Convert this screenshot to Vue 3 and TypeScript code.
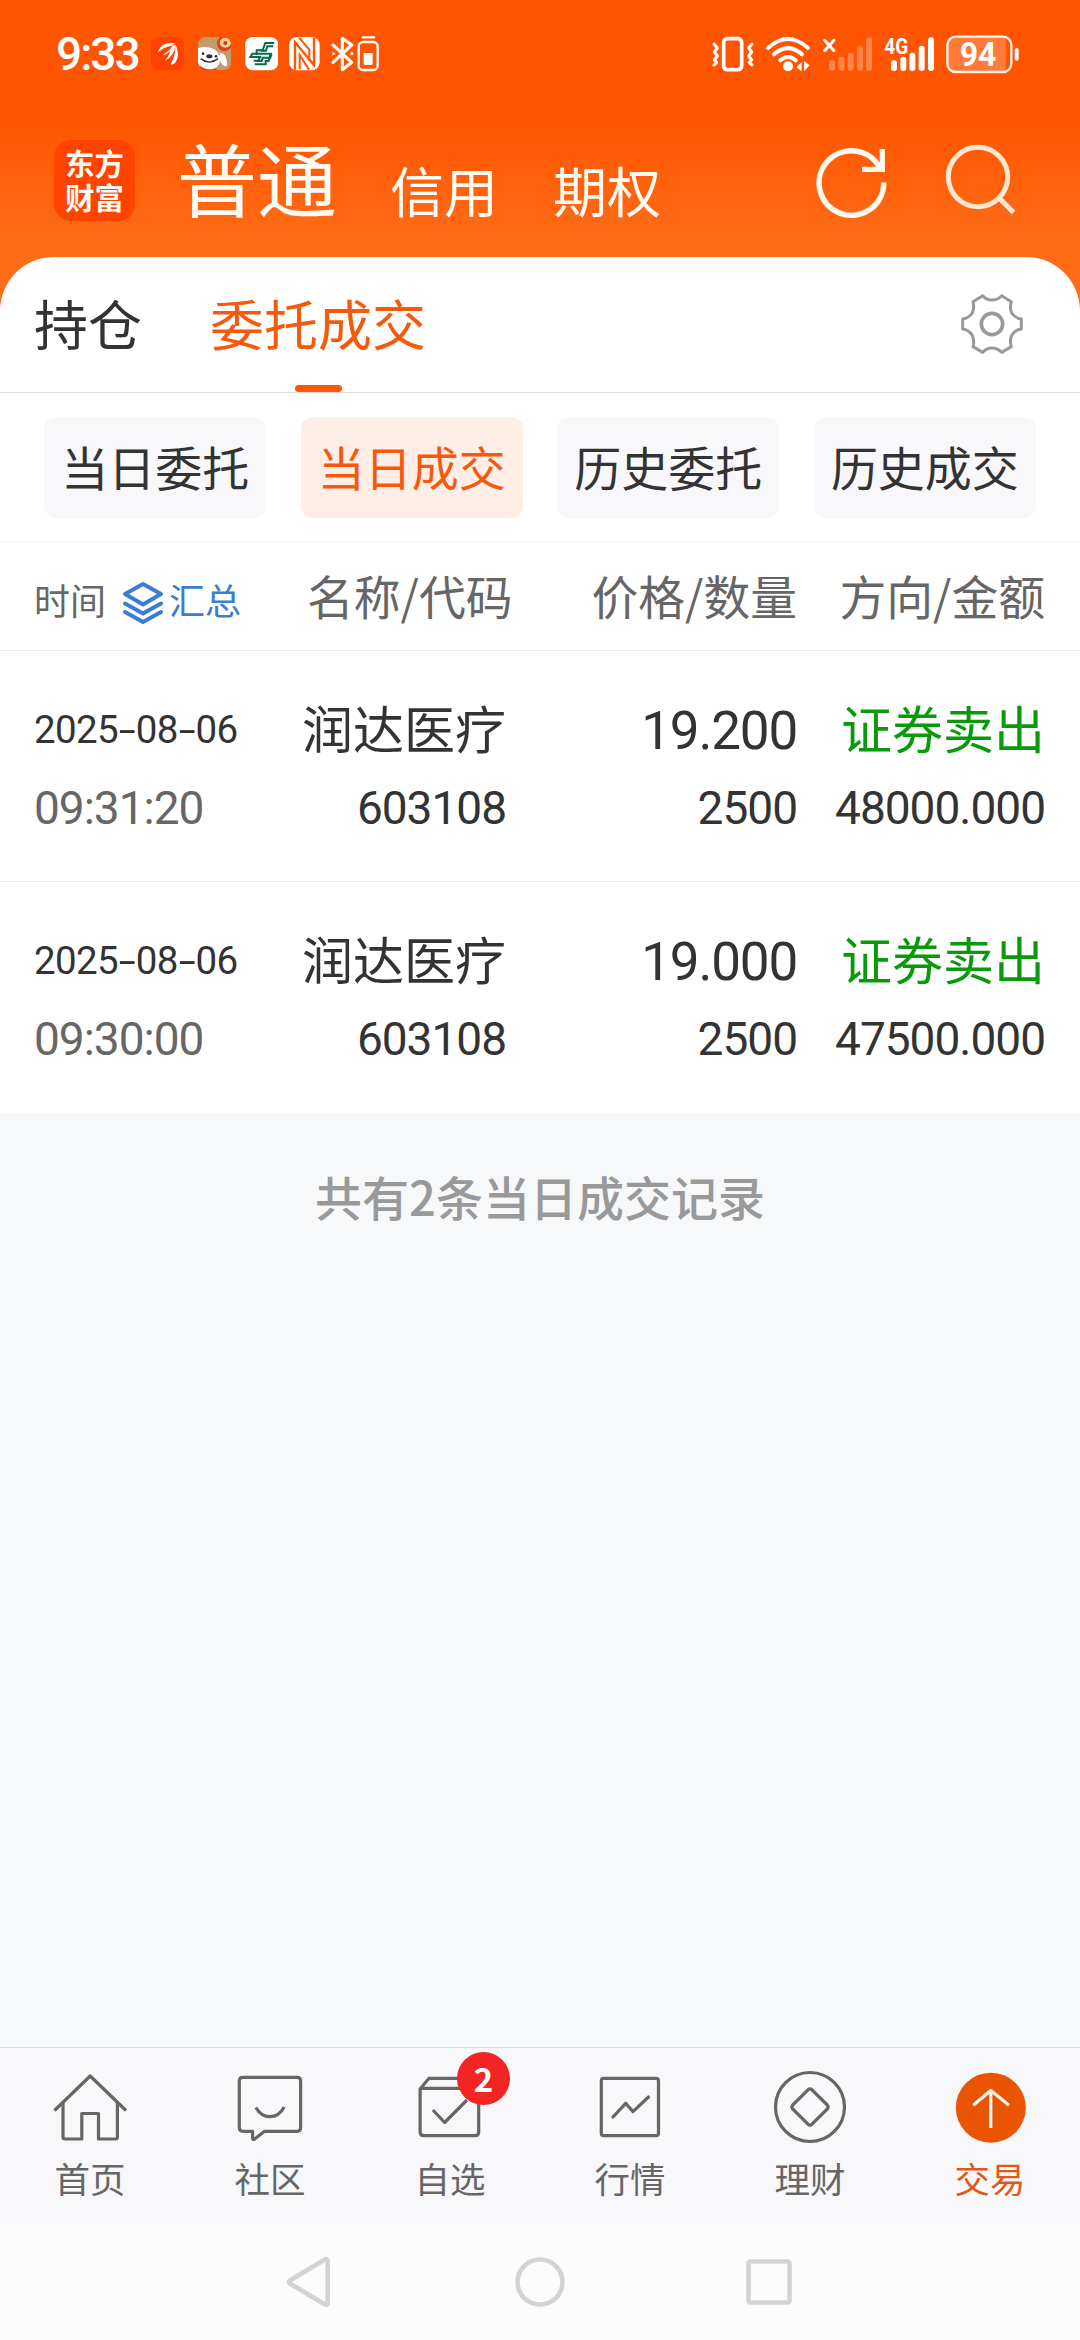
<script setup lang="ts">
interface Trade {
  date: string
  time: string
  name: string
  code: string
  price: string
  quantity: string
  side: string
  amount: string
}

const accounts: string[] = ['信用', '期权']
const filters: string[] = ['当日委托', '当日成交', '历史委托', '历史成交']
const activeFilter = '当日成交'

const trades: Trade[] = [
  {
    date: '2025-08-06',
    time: '09:31:20',
    name: '润达医疗',
    code: '603108',
    price: '19.200',
    quantity: '2500',
    side: '证券卖出',
    amount: '48000.000',
  },
  {
    date: '2025-08-06',
    time: '09:30:00',
    name: '润达医疗',
    code: '603108',
    price: '19.000',
    quantity: '2500',
    side: '证券卖出',
    amount: '47500.000',
  },
]
</script>

<template>
  <div class="screen">
    <header class="hero">
      <div class="status">
        <span class="clock">9:33</span>
        <svg class="s-app" viewBox="332 50 100 100">
          <rect x="332" y="50" width="100" height="100" rx="24" fill="#ff4200" />
          <path d="M353 97Q358 76 376 70Q392 66 404 69L396 76Q372 78 353 97Z" fill="#fff" />
          <path d="M363 106Q386 94 397 76L405 73Q404 104 374 122Q388 102 390 92Q378 104 363 106Z" fill="#fff" />
          <path d="M391 131Q407 104 405 72Q415 92 412 112Q407 128 396 133Z" fill="#fff" />
        </svg>
        <svg class="s-app" viewBox="474 50 100 100">
          <clipPath id="dogClip"><rect x="474" y="50" width="100" height="100" rx="24" /></clipPath>
          <g clip-path="url(#dogClip)">
            <rect x="474" y="50" width="100" height="100" fill="#c39a69" />
            <path d="M474 84Q494 76 515 84Q540 92 541 118Q538 145 510 147Q482 146 474 128Z" fill="#fff" />
            <path d="M541 98Q556 96 561 124Q565 138 555 138Q540 132 539 112Z" fill="#fff" />
            <path d="M480 138Q505 155 530 144V150H480Z" fill="#e23a20" />
            <path d="M482 115Q508 136 534 115" fill="none" stroke="#332d28" stroke-width="4" />
            <ellipse cx="508" cy="108" rx="9" ry="6" fill="#332d28" />
            <circle cx="489" cy="100" r="4" fill="#332d28" />
            <circle cx="528" cy="108" r="4" fill="#332d28" />
            <circle cx="554" cy="69" r="23" fill="#e33a1d" />
            <ellipse cx="556" cy="67" rx="17" ry="15" fill="#f9cd94" />
            <circle cx="556" cy="68" r="6" fill="#c23a20" />
          </g>
        </svg>
        <svg class="s-app" viewBox="615 50 100 100">
          <rect x="615" y="50" width="100" height="100" rx="24" fill="#fff" />
          <g fill="none" stroke="#04694f" stroke-width="6" stroke-linejoin="miter">
            <path d="M703 68H676L668 90H650V100H692L686 122H677V132H644" />
            <path d="M700 78H682L678 91H662" />
            <path d="M651 100H637L631 110H660L655 121H641" />
            <path d="M695 101L691 112H668L665 122H650" />
          </g>
        </svg>
        <svg class="s-nfc" viewBox="748 50 92 100">
          <rect x="748" y="50" width="92" height="100" rx="24" fill="#fff" />
          <path d="M766 148V66L823 134V52" fill="none" stroke="#ff5500" stroke-width="7" />
          <path d="M778 52L809 88V122M780 146V104L808 148" fill="none" stroke="#ff5500" stroke-width="6" />
        </svg>
        <svg class="s-bt" viewBox="874 44 146 112">
          <path d="M880 74L936 126L908 148V54L936 74L880 126" fill="none" stroke="#fff" stroke-width="9.5" stroke-linejoin="round" stroke-linecap="round" />
          <path d="M878 94L888 100L878 106Z" fill="#fff" />
          <circle cx="936" cy="100" r="5" fill="#fff" />
          <rect x="957" y="65" width="57" height="84" rx="13" fill="none" stroke="#fff" stroke-width="7" />
          <path d="M970 51H1003" stroke="#fff" stroke-width="7" stroke-linecap="round" />
          <rect x="972" y="98" width="27" height="36" rx="4" fill="#fff" />
        </svg>
        <svg class="s-right" viewBox="60 40 930 120">
          <g fill="none" stroke="#fff" stroke-linecap="round" stroke-linejoin="round">
            <rect x="98" y="54" width="54" height="93" rx="11" stroke-width="11" />
            <path d="M69 70L79 82L70 94L79 106L70 118L77 125L69 133" stroke-width="9" />
            <path d="M183 70L173 82L182 94L173 106L182 118L175 125L183 133" stroke-width="9" />
            <path d="M231 82Q291 28 351 82" stroke-width="12" />
            <path d="M249 101Q291 64 333 101" stroke-width="12" />
            <path d="M268 119Q291 99 314 119" stroke-width="12" />
            <path d="M401 59L429 90M429 59L401 90" stroke-width="9" />
          </g>
          <circle cx="291" cy="137" r="15" fill="#fff" />
          <path d="M316 140L332 124V152ZM356 134L339 121V152Z" fill="#fff" />
          <g stroke="#ff8449" stroke-width="18" stroke-linecap="round">
            <path d="M423 128V142M451 117V142M479 105V142M507 84V142M534 59V142" />
          </g>
          <g stroke="#fff" stroke-width="18" stroke-linecap="round">
            <path d="M609 128V142M637 117V142M664 105V142M692 84V142M720 59V142" />
          </g>
          <text x="580" y="101" class="net" textLength="72" lengthAdjust="spacingAndGlyphs">4G</text>
          <path d="M794 50H944V152H794Q770 152 770 128V74Q770 50 794 50Z" fill="#ff7a3b" />
          <rect x="769" y="48" width="192" height="106" rx="25" fill="none" stroke="#fff2e8" stroke-width="7" />
          <path d="M977 88V114" stroke="#fff" stroke-width="12" stroke-linecap="round" />
          <text x="806" y="135" class="level" textLength="110" lengthAdjust="spacingAndGlyphs">94</text>
        </svg>
      </div>

      <nav class="accounts">
        <div class="logo">东方财富</div>
        <span class="account-main">普通</span>
        <span v-for="account in accounts" :key="account" class="account">{{ account }}</span>
        <svg class="refresh" viewBox="0 0 76 76" fill="none" stroke="#fff9f0" stroke-width="5.5">
          <path d="M69.7 38.5A32.3 32.3 0 1 1 66 24" />
          <path d="M68.3 5V25.3H48" stroke-width="5.2" />
        </svg>
        <svg class="search" viewBox="0 0 76 76" fill="none" stroke="#ffe6d3" stroke-width="5">
          <circle cx="36" cy="34" r="29.7" />
          <path d="M57 55L71.5 69.5" />
        </svg>
      </nav>
    </header>

    <main class="panel">
      <div class="tabs">
        <span class="tab">持仓</span>
        <span class="tab tab-on">委托成交</span>
        <svg class="gear" viewBox="780 547 192 192" fill="none" stroke="#999" stroke-linejoin="round">
          <path
            stroke-width="9"
            d="M848 558Q859 571 876 571Q893 571 905 558L934 576Q928 594 935 610Q946 626 964 628V658Q946 660 935 677Q928 694 934 711L905 728Q893 715 876 715Q859 715 848 728L819 711Q824 694 817 677Q806 660 788 658V628Q806 626 817 610Q824 594 819 576Z"
          />
          <circle cx="876" cy="643" r="32" stroke-width="11" />
        </svg>
      </div>

      <div class="filters">
        <span v-for="item in filters" :key="item" class="chip" :class="{ 'chip-on': item === activeFilter }">{{ item }}</span>
      </div>

      <div class="grid head">
        <div class="time-head">
          <span>时间</span>
          <svg class="layers" viewBox="0 0 42 44" fill="none" stroke="#3b7dd2" stroke-width="4" stroke-linejoin="round" stroke-linecap="round">
            <path d="M21 3L39 13L21 23.5L3 13Z" />
            <path d="M3 22.5L21 32.5L39 22.5" />
            <path d="M3 31L21 41L39 31" />
          </svg>
          <span class="summary">汇总</span>
        </div>
        <span class="h-name">名称/代码</span>
        <span>价格/数量</span>
        <span>方向/金额</span>
      </div>

      <div v-for="trade in trades" :key="trade.time" class="grid row">
        <div class="cell left">
          <span class="date"><template v-for="(part, i) in trade.date.split('-')" :key="i"><i v-if="i > 0">-</i>{{ part }}</template></span>
          <span class="num muted">{{ trade.time }}</span>
        </div>
        <div class="cell name-cell">
          <span class="word">{{ trade.name }}</span>
          <span class="num">{{ trade.code }}</span>
        </div>
        <div class="cell">
          <span class="price">{{ trade.price }}</span>
          <span class="num">{{ trade.quantity }}</span>
        </div>
        <div class="cell">
          <span class="word sell">{{ trade.side }}</span>
          <span class="num">{{ trade.amount }}</span>
        </div>
      </div>
    </main>

    <p class="total">共有{{ trades.length }}条当日成交记录</p>

    <nav class="tabbar">
      <div class="item">
        <svg viewBox="0 0 180 100">
          <path d="M54.5 62.5L90.2 28L126 62.5" />
          <path d="M63 55V89.3Q63 91 65 91H81.8V65.5H98.5V91H115.5Q117.4 91 117.4 89.3V55" />
        </svg>
        <span>首页</span>
      </div>
      <div class="item">
        <svg viewBox="0 0 180 100">
          <path d="M63 29.3H117Q120.6 29.3 120.6 33V79.5Q120.6 83.3 117 83.3H84.5L74 91.5Q72.6 91.8 72.6 90V83.3H63Q59.3 83.3 59.3 79.5V33Q59.3 29.3 63 29.3Z" />
          <path d="M75.9 59.5Q81 68.7 90 68.7Q99 68.7 104.2 59" />
        </svg>
        <span>社区</span>
      </div>
      <div class="item">
        <svg viewBox="0 0 180 100">
          <path d="M60.1 41L69 30.3H110L118.7 41V84Q118.7 87.7 115 87.7H64Q60.1 87.7 60.1 84ZM60.1 40.3H118.7" />
          <path d="M72.9 62L84.6 74.5L107 52" />
        </svg>
        <b class="badge">2</b>
        <span>自选</span>
      </div>
      <div class="item">
        <svg viewBox="0 0 180 100">
          <rect x="61.3" y="30.3" width="57.2" height="57.4" rx="2.5" />
          <path d="M73 69L85.7 55.3L93 63.6L108.5 49" stroke-linecap="round" />
        </svg>
        <span>行情</span>
      </div>
      <div class="item">
        <svg viewBox="0 0 180 100">
          <circle cx="90" cy="59" r="34.5" />
          <path d="M88 41.8Q90 40 92 41.8L107.3 57Q109 59 107.3 61L92 76.2Q90 78 88 76.2L72.7 61Q71 59 72.7 57Z" />
        </svg>
        <span>理财</span>
      </div>
      <div class="item item-on">
        <svg viewBox="0 0 180 100">
          <circle cx="90.8" cy="59.7" r="35" fill="#ea5504" stroke="none" />
          <path d="M90.8 42V80M73.2 57.2L90.8 42.5L109 57.2" stroke="#fff5ea" />
        </svg>
        <span>交易</span>
      </div>
    </nav>

    <div class="sysnav">
      <svg viewBox="0 0 1080 116" fill="none" stroke="#d3d3d3" stroke-width="4.6" stroke-linejoin="round">
        <path d="M289.8 56.5Q288.5 58 289.8 59.5L325 80.5Q327.7 81.5 327.7 79V37Q327.7 34.5 325 35.5Z" />
        <circle cx="540" cy="58" r="22.5" />
        <rect x="748.5" y="37.5" width="41" height="41" rx="2" />
      </svg>
    </div>
  </div>
</template>

<style>
body {
  margin: 0;
}
</style>

<style scoped>
.screen {
  display: flex;
  flex-direction: column;
  width: 1080px;
  height: 2340px;
  overflow: hidden;
  background: #f7f8fa;
  color: #333;
  font-family: "Noto Sans CJK SC", sans-serif;
}
.hero {
  height: 317px;
  flex: none;
  margin-bottom: -60px;
  background: linear-gradient(#ff5500 0, #ff5500 122px, #ff6b16 235px, #ff6d19 317px);
}
.status {
  display: flex;
  align-items: center;
  height: 108px;
  padding-left: 56px;
  color: #fff;
}
.clock {
  width: 95px;
  font: 500 46px/60px Roboto, sans-serif;
  letter-spacing: -2px;
}
.s-app {
  width: 33.3px;
  height: 33.3px;
  margin-right: 13.7px;
}
.s-nfc {
  width: 30.7px;
  height: 33.3px;
  margin-left: -2.7px;
}
.s-bt {
  width: 48.7px;
  height: 37.3px;
  margin-left: 11.3px;
}
.s-right {
  width: 310px;
  height: 40px;
  margin-left: 331px;
}
.net {
  fill: #fff;
  font: 700 68px Roboto, sans-serif;
}
.level {
  fill: #fff;
  font: 700 97px Roboto, sans-serif;
}
.accounts {
  display: flex;
  height: 149px;
  padding-left: 54px;
  color: #fffaf2;
}
.logo {
  box-sizing: border-box;
  width: 81px;
  height: 81px;
  margin-top: 32px;
  padding: 5px 10px 0 11px;
  border-radius: 17px;
  background: #ff4300;
  font-size: 29.5px;
  font-weight: 700;
  line-height: 34px;
}
.account-main {
  width: 213px;
  padding-left: 42px;
  font-size: 80px;
  line-height: 136px;
}
.account {
  width: 163px;
  font-size: 54px;
  line-height: 163px;
}
.refresh {
  width: 76px;
  height: 76px;
  margin: 36px 0 0 98px;
}
.search {
  width: 76px;
  height: 76px;
  margin: 35px 0 0 52px;
}
.panel {
  flex: none;
  height: 855px;
  border-radius: 54px 54px 0 0;
  background: #fff;
}
.tabs {
  display: flex;
  box-sizing: border-box;
  height: 136px;
  padding-left: 34px;
  border-bottom: 1px solid #ddd;
  font-size: 54px;
  line-height: 132px;
}
.tab {
  width: 176px;
}
.tab-on {
  position: relative;
  width: 216px;
  color: #f55a0c;
}
.tab-on::after {
  content: "";
  position: absolute;
  left: 85px;
  bottom: 0;
  width: 47px;
  height: 7px;
  border-radius: 3.5px;
  background: #fc5705;
}
.gear {
  width: 64px;
  height: 64px;
  margin: 35px 0 0 534px;
}
.filters {
  display: flex;
  gap: 34.3px;
  box-sizing: border-box;
  height: 149px;
  padding: 24px 44px 0;
  border-bottom: 1px solid #f6f6f6;
}
.chip {
  flex: 1;
  height: 101px;
  border-radius: 12px;
  background: #f8f8fb;
  text-align: center;
  font-size: 47px;
  line-height: 98px;
}
.chip-on {
  background: #ffeee6;
  color: #f55a0c;
}
.grid {
  display: grid;
  grid-template-columns: 273px 201px 289px 1fr;
  box-sizing: border-box;
  padding: 0 35px 0 34px;
  border-bottom: 1px solid #ececec;
  text-align: right;
}
.head {
  height: 109px;
  color: #666;
  font-size: 46.8px;
  line-height: 106px;
}
.head > span {
  white-space: nowrap;
}
.time-head {
  display: flex;
  font-size: 36px;
  line-height: 115px;
}
.layers {
  width: 42px;
  height: 44px;
  margin: 39px 5px 0 16px;
}
.summary {
  color: #3b7dd2;
}
.row {
  height: 231px;
}
.row:last-child {
  border-bottom-color: #fff;
}
.cell {
  display: flex;
  flex-direction: column;
  padding-top: 40px;
}
.left {
  text-align: left;
}
.name-cell {
  padding-right: 2px;
}
.cell > span {
  height: 78px;
  line-height: 78px;
  white-space: nowrap;
}
.cell > .word {
  margin-left: -10px;
  font-size: 51px;
  line-height: 73px;
}
.sell {
  color: #0a990a;
}
.cell .num {
  font-family: Roboto, sans-serif;
  font-size: 46px;
  letter-spacing: -1px;
}
.cell > .price {
  font-family: Roboto, sans-serif;
  font-size: 53px;
  letter-spacing: -1.2px;
  line-height: 80px;
}
.date {
  font-family: Roboto, sans-serif;
  font-size: 38.5px;
  letter-spacing: -0.6px;
}
.date i {
  display: inline-block;
  width: 17.6px;
  font-style: normal;
  text-align: center;
  transform: scaleX(1.6);
}
.muted {
  color: #666;
}
.total {
  flex: 1;
  margin: 0;
  padding-top: 46px;
  color: #999;
  text-align: center;
  font-size: 47px;
  font-weight: 500;
  line-height: 75px;
}
.tabbar {
  display: flex;
  box-sizing: border-box;
  height: 177px;
  flex: none;
  border-top: 1px solid #ddd;
  background: #f8f8fb;
}
.item {
  position: relative;
  display: flex;
  flex: 1;
  flex-direction: column;
  color: #666;
  text-align: center;
  font-size: 35.5px;
  line-height: 60px;
}
.item svg {
  width: 180px;
  height: 100px;
  fill: none;
  stroke: #666;
  stroke-width: 3.2;
  stroke-linejoin: round;
}
.item-on {
  color: #e2581a;
}
.badge {
  position: absolute;
  left: 97px;
  top: 4px;
  width: 53px;
  height: 53px;
  border-radius: 50%;
  background: #f22424;
  color: #fff;
  font-size: 33px;
  line-height: 52px;
}
.sysnav {
  flex: none;
  height: 116px;
  background: #fcfcfc;
}
.sysnav svg {
  display: block;
  width: 1080px;
  height: 116px;
}
</style>
